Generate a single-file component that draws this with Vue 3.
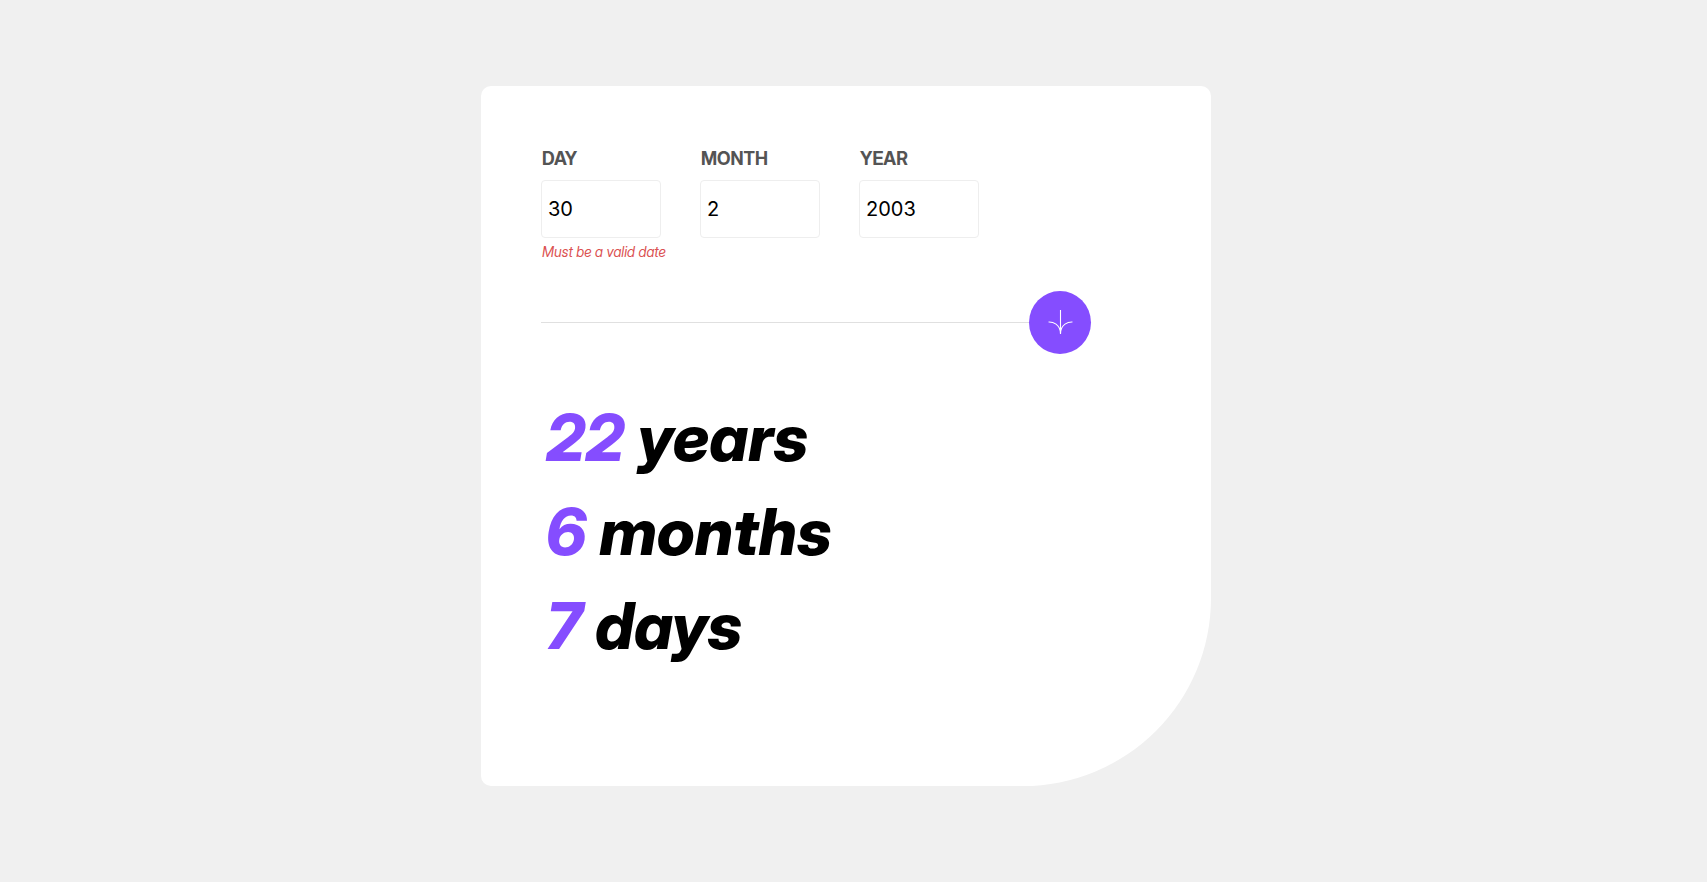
<script setup>
import { ref } from 'vue'

const fields = ref([
  { id: 'day', label: 'DAY', value: '30', error: 'Must be a valid date' },
  { id: 'month', label: 'MONTH', value: '2', error: '' },
  { id: 'year', label: 'YEAR', value: '2003', error: '' },
])

const results = ref([
  { amount: 22, unit: 'years' },
  { amount: 6, unit: 'months' },
  { amount: 7, unit: 'days' },
])
</script>

<template>
  <main class="page">
    <section class="card">
      <form @submit.prevent>
        <div class="fields">
          <div v-for="f in fields" :key="f.id" class="field">
            <label :for="f.id">{{ f.label }}</label>
            <input :id="f.id" v-model="f.value" type="text" inputmode="numeric" />
            <p class="error">{{ f.error }}</p>
          </div>
        </div>
        <div class="divider">
          <span class="line"></span>
          <button type="submit" aria-label="Calculate age">
            <svg viewBox="0 0 46 44" width="25" height="24" fill="none" stroke="#fff" stroke-width="2">
              <path d="M1 22.019C8.333 21.686 23 25.616 23 44M23 44V0M45 22.019C37.667 21.686 23 25.616 23 44" />
            </svg>
          </button>
        </div>
      </form>
      <div class="results">
        <p v-for="r in results" :key="r.unit"><span>{{ r.amount }}</span> {{ r.unit }}</p>
      </div>
    </section>
  </main>
</template>

<style>
body {
  margin: 0;
  background: #f0f0f0;
}
</style>

<style scoped>
.page {
  box-sizing: border-box;
  min-height: 100vh;
  padding: 86px 15px 96px 0;
  font-family: Inter, "Liberation Sans", sans-serif;
}

.card {
  box-sizing: border-box;
  max-width: 730px;
  margin: 0 auto;
  padding: 60px 60px 113px;
  background: #fff;
  border-radius: 10px 10px 188px 10px;
}

.fields {
  display: flex;
  gap: 39px;
}

.field {
  display: flex;
  flex-direction: column;
  width: 120px;
}

label {
  padding-left: 1px;
  color: #545454;
  font-family: "Inter Display", Inter, sans-serif;
  font-size: 18px;
  font-weight: 700;
  line-height: 26px;
}

input {
  box-sizing: border-box;
  width: 100%;
  height: 58px;
  margin: 8px 0 4px;
  padding: 0 6px;
  border: 1px solid #eee;
  border-radius: 4px;
  background: #fff;
  color: #000;
  font-family: inherit;
  font-size: 20px;
}

.error {
  min-height: 20px;
  margin: 0;
  padding-left: 1px;
  color: #db5151;
  font-family: "Inter Display", Inter, sans-serif;
  font-size: 14px;
  font-style: italic;
  line-height: 20px;
  white-space: nowrap;
}

.divider {
  display: flex;
  align-items: center;
  max-width: 550px;
  margin-top: 29px;
}

.line {
  flex: 1;
  height: 1px;
  background: #e0e0e0;
}

button {
  display: flex;
  align-items: center;
  justify-content: center;
  width: 62px;
  height: 63px;
  padding: 0 0 1px 1px;
  border: 0;
  border-radius: 50%;
  background: #854dff;
  cursor: pointer;
}

.results {
  margin-top: 37px;
  padding-left: 5px;
}

.results p {
  margin: 0;
  font-family: "Inter Display", Inter, sans-serif;
  font-size: 64px;
  font-style: italic;
  font-weight: 800;
  line-height: 94px;
}

.results span {
  color: #854dff;
}
</style>
